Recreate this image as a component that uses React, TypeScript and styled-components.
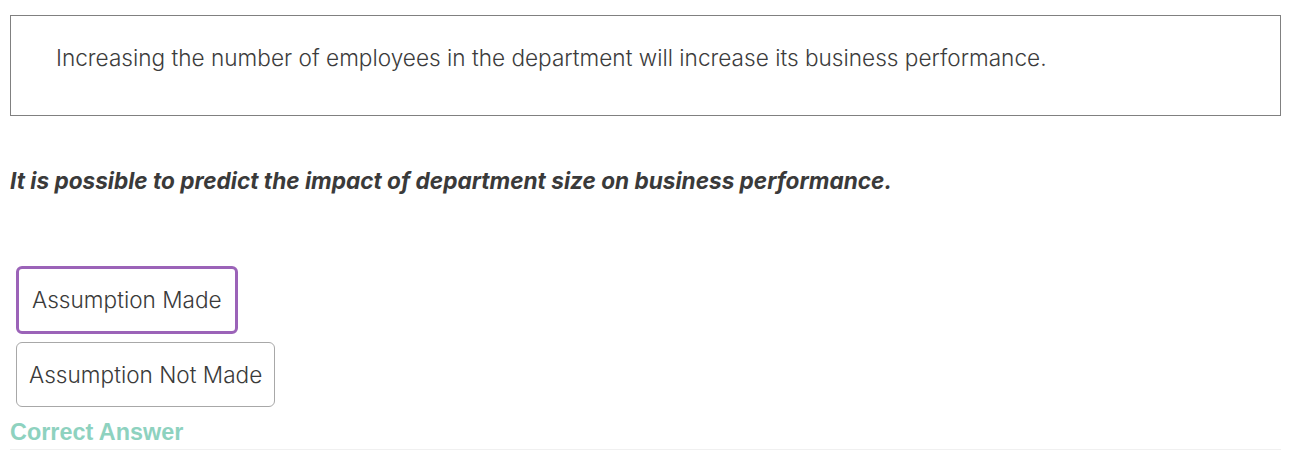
import React from "react";
import styled, { createGlobalStyle } from "styled-components";

const GlobalStyle = createGlobalStyle`
  html, body {
    margin: 0;
    padding: 0;
    background: #ffffff;
  }
  body {
    font-family: Inter, "Noto Sans", sans-serif;
    color: #3a3a3a;
  }
`;

const Page = styled.div`
  display: flex;
  flex-direction: column;
  padding: 15px 12px 0 10px;
`;

const PassageBox = styled.div`
  border: 1px solid #808080;
  height: 101px;
  box-sizing: border-box;
  padding: 27px 45px 0 45px;
`;

const PassageText = styled.p`
  margin: 0;
  font-size: 22.6px;
  font-weight: 300;
  line-height: 30px;
  color: #3c3c3c;
`;

const Statement = styled.p`
  margin: 50px 0 0 0;
  font-size: 22.6px;
  font-weight: 700;
  font-style: italic;
  line-height: 30px;
  color: #3a3a3a;
`;

const Options = styled.div`
  display: flex;
  flex-direction: column;
  align-items: flex-start;
  gap: 8px;
  margin-top: 70px;
  padding-left: 6px;
`;

const OptionButton = styled.button<{ $selected?: boolean }>`
  font-family: Inter, "Noto Sans", sans-serif;
  font-size: 22.6px;
  font-weight: 300;
  color: #3a3a3a;
  background: #ffffff;
  line-height: 30px;
  border-radius: 6px;
  box-sizing: border-box;
  text-align: left;
  cursor: pointer;
  border: ${(p) => (p.$selected ? "3px solid #9b63b8" : "1px solid #a8a8a8")};
  height: ${(p) => (p.$selected ? "68px" : "65px")};
  padding: ${(p) => (p.$selected ? "0 13px" : "0 12px")};
`;

const AnswerLabel = styled.div`
  font-family: "Liberation Sans", Arial, sans-serif;
  font-weight: 700;
  font-size: 23.4px;
  line-height: 28px;
  color: #8ed2bf;
  margin-top: 11px;
  padding-bottom: 3px;
  border-bottom: 1px solid #f0f0f0;
`;

export default function App() {
  return (
    <>
      <GlobalStyle />
      <Page>
        <PassageBox>
          <PassageText>
            Increasing the number of employees in the department will increase
            its business performance.
          </PassageText>
        </PassageBox>
        <Statement>
          It is possible to predict the impact of department size on business
          performance.
        </Statement>
        <Options>
          <OptionButton $selected>Assumption Made</OptionButton>
          <OptionButton>Assumption Not Made</OptionButton>
        </Options>
        <AnswerLabel>Correct Answer</AnswerLabel>
      </Page>
    </>
  );
}
